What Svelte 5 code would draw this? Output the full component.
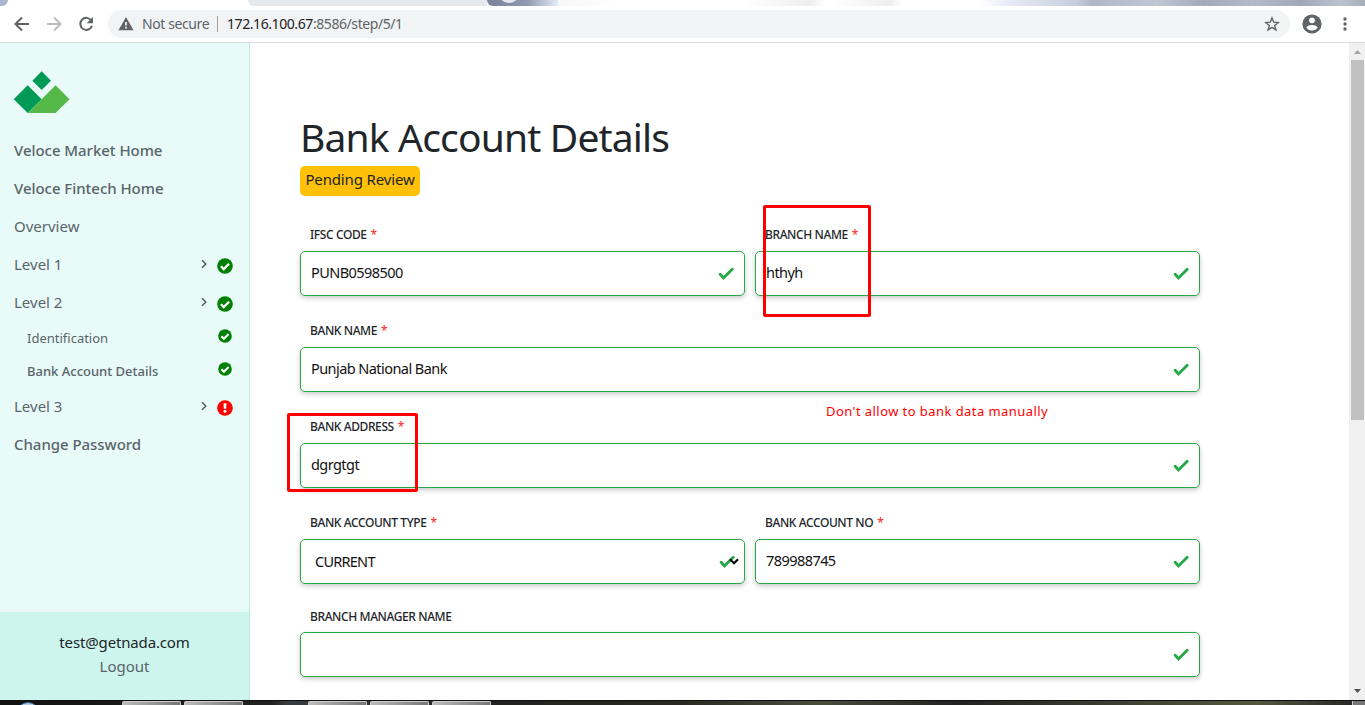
<script>
  const nav = [
    { text: 'Veloce Market Home', kind: 'strong' },
    { text: 'Veloce Fintech Home', kind: 'strong' },
    { text: 'Overview', kind: 'plain' },
    { text: 'Level 1', kind: 'level', arrow: true, status: 'ok' },
    { text: 'Level 2', kind: 'level', arrow: true, status: 'ok' },
    { text: 'Identification', kind: 'sub', status: 'ok' },
    { text: 'Bank Account Details', kind: 'sub strong', status: 'ok' },
    { text: 'Level 3', kind: 'level', arrow: true, status: 'bad' },
    { text: 'Change Password', kind: 'strong' }
  ];
  const rows = [
    [
      { label: 'IFSC CODE', req: true, value: 'PUNB0598500' },
      { label: 'BRANCH NAME', req: true, value: 'hthyh' }
    ],
    [{ label: 'BANK NAME', req: true, value: 'Punjab National Bank' }],
    [{ label: 'BANK ADDRESS', req: true, value: 'dgrgtgt' }],
    [
      { label: 'BANK ACCOUNT TYPE', req: true, value: 'CURRENT', select: true },
      { label: 'BANK ACCOUNT NO', req: true, value: '789988745' }
    ],
    [{ label: 'BRANCH MANAGER NAME', value: '' }]
  ];
</script>

<div class="screen">
  <div class="tabs">
    <i class="t1"></i><i class="t2"></i><i class="t3"></i><i class="t4"><b></b></i><i class="t5"></i>
  </div>
  <header>
    <svg class="ic" width="100" height="36" viewBox="0 0 100 36" fill="none" stroke="#5f6368" stroke-width="2">
      <path d="M29 18H16M22 11.5L15.5 18l6.500 6.500" />
      <path d="M47 18h13M54 11.500l6.500 6.500-6.500 6.500" stroke="#babcbe" />
      <path d="M91.300 14.500A6 6 0 1 0 92 19.800" />
      <path d="M93 11v6.300h-6.300z" fill="#5f6368" stroke="none" />
    </svg>
    <div class="omni">
      <svg width="16" height="14" viewBox="0 0 16 14"><path d="M8 0l7.500 13.300H.5z" fill="#5f6368" /><path d="M7.200 5h1.600v3.600H7.200zM7.200 9.800h1.600v1.700H7.200z" fill="#fff" /></svg>
      <span class="ns">Not secure</span>
      <i class="sep"></i>
      <span class="url">172.16.100.67<em>:8586/step/5/1</em></span>
      <svg class="star" width="16" height="16" viewBox="0 0 16 16"><path d="M8 1.900l1.700 4.300 4.600.3-3.600 2.900 1.200 4.500L8 11.400l-3.900 2.500 1.200-4.500-3.600-2.900 4.600-.3z" fill="none" stroke="#5f6368" stroke-width="1.400" /></svg>
    </div>
    <svg class="user" width="20" height="20" viewBox="0 0 20 20"><circle cx="10" cy="10" r="9.600" fill="#5f6368" /><circle cx="10" cy="6.300" r="2.900" fill="#fff" /><path d="M4.300 13.600c.6-1.800 3.700-2.600 5.700-2.600s5.100.8 5.700 2.600c-1.200 1.800-3.300 3-5.700 3s-4.500-1.200-5.700-3z" fill="#fff" /></svg>
    <svg class="dots" width="4" height="14" viewBox="0 0 4 14" fill="#5f6368"><circle cx="2" cy="2" r="1.700" /><circle cx="2" cy="7" r="1.700" /><circle cx="2" cy="12" r="1.700" /></svg>
  </header>

  <div class="page">
    <aside>
      <svg class="logo" width="56" height="42" viewBox="0 0 56 42">
        <path d="M27.700 .3l9.300 9.400-9.300 9.300-9.300-9.300z" fill="#009a57" />
        <path d="M13.700 14.300l14 14-14 13.700L-.3 28.300z" fill="#009a57" />
        <path d="M41.600 14.300l13.900 14-13.900 13.700H13.700z" fill="#54b948" />
      </svg>
      <nav>
        {#each nav as item}
          <a class={item.kind}>
            <span>{item.text}</span>
            {#if item.arrow}
              <svg class="arrow" width="6" height="10" viewBox="0 0 6 10"><path d="M1 1.300L4.800 5 1 8.700" fill="none" stroke="#4c5658" stroke-width="1.400" /></svg>
            {/if}
            {#if item.status === 'ok'}
              <svg class="status" viewBox="0 0 16 16"><circle cx="8" cy="8" r="7.800" fill="#008000" /><path d="M3.900 8.300l2.800 2.800 5.400-5.400" fill="none" stroke="#fff" stroke-width="2.300" /></svg>
            {:else if item.status === 'bad'}
              <svg class="status" viewBox="0 0 16 16"><circle cx="8" cy="8" r="7.800" fill="#f00" /><path d="M6.500 3.300h3l-.3 5.500H6.800z" fill="#fff" /><circle cx="8" cy="11.300" r="1.500" fill="#fff" /></svg>
            {/if}
          </a>
        {/each}
      </nav>
      <div class="account">
        <span class="mail">test@getnada.com</span>
        <span class="out">Logout</span>
      </div>
    </aside>

    <main>
      <h1>Bank Account Details</h1>
      <div class="badge">Pending Review</div>
      <form>
        {#each rows as row}
          <div class="row">
            {#each row as f}
              <div class="field">
                <div class="label"><span>{f.label}</span>{#if f.req}<sup>*</sup>{/if}</div>
                <div class="input" class:select={f.select}>
                  <span>{f.value}</span>
                  <svg class="tick" width="16" height="14" viewBox="0 0 16 14"><path d="M2.200 7.300l3.300 3.700L14.200 2.300" fill="none" stroke="#28a745" stroke-width="2.900" stroke-linecap="round" /></svg>
                  {#if f.select}
                    <svg class="caret" width="10" height="7" viewBox="0 0 10 7"><path d="M1 1.300l4 4 4-4" fill="none" stroke="#000" stroke-width="2" /></svg>
                  {/if}
                </div>
              </div>
            {/each}
          </div>
        {/each}
      </form>
    </main>

    <div class="scroll">
      <svg width="16" height="17" viewBox="0 0 16 17"><path d="M5 11h7L8.500 7z" fill="#a3a3a3" /></svg>
      <i></i>
      <svg class="down" width="16" height="17" viewBox="0 0 16 17"><path d="M5 6h7L8.500 10z" fill="#505050" /></svg>
    </div>
  </div>
  <div class="taskbar">
    <i class="w1"></i><i class="w2"></i><i class="w3"></i><i class="w4"></i><i class="w5"></i>
    <b class="orb"></b><b class="show"></b>
  </div>

  <div class="mark m1"></div>
  <div class="mark m2"></div>
  <div class="note">Don't allow to bank data manually</div>
</div>

<style>
  :global(body) { overflow: hidden; background: #fff; }
  .screen { position: relative; display: flex; flex-direction: column; width: 1365px; height: 705px; overflow: hidden; font-family: "Noto Sans", "Open Sans", sans-serif; color: #212529; }
  .tabs { display: flex; height: 6px; overflow: hidden; background: #fff; }
  .tabs i { height: 6px; }
  .t1 { width: 8px; background: #a9b6cd; border-bottom-right-radius: 6px; }
  .t2 { width: 240px; }
  .t3 { width: 239px; background: #e4e8ec; border-bottom-left-radius: 6px; }
  .t4 { width: 73px; background: linear-gradient(90deg, #79849c, #8f99b0 55%, #e4e9f8 96%, #fff); border-bottom-left-radius: 6px; overflow: hidden; }
  .t4 b { display: block; width: 20px; height: 18px; margin: -15px 0 0 12px; border-radius: 50%; background: #e4e8ec; }
  .t5 { flex: 1; background: linear-gradient(90deg, #f7f7f7 0, #fff 7%, #fff 23%, #eee 31%, #fff 33%, #fff 34%, #eee 41%, #fff 42.500%, #fff 52%, #e6eaf5 56%, #c8cede 64%, #b0b8c8 66%, #c0c6d4 74%, #a3abbb 80%, #b4bac8 86%, #a0a8b8 92%, #bcc1cf 97%, #a5adbb); }
  header { display: flex; align-items: center; box-sizing: border-box; height: 37px; border-bottom: 1px solid #d9dbdc; background: #fff; }
  .ic { margin-right: 8px; }
  .omni { display: flex; align-items: center; box-sizing: border-box; width: 1182px; height: 28px; padding: 0 10px; border-radius: 14px; background: #f1f3f4; font-size: 14px; color: #5f6368; white-space: nowrap; }
  .omni span { position: relative; top: -1px; }
  .ns { margin-left: 8px; width: 67px; letter-spacing: -0.4px; }
  .sep { width: 1px; height: 16px; margin: 0 9px 0 8px; background: #a2a5a8; }
  .url { color: #202124; letter-spacing: -0.42px; }
  .url em { font-style: normal; color: #5f6368; }
  .star { margin-left: auto; }
  .user { margin-left: 12px; }
  .dots { margin-left: 20.500px; }
  .page { display: flex; height: 657px; }
  aside { display: flex; flex-direction: column; box-sizing: border-box; width: 250px; border-right: 1px solid #b8eee2; background: #e9fbf8; }
  .logo { margin: 28px 0 19px 14px; flex: none; overflow: visible; }
  nav { display: flex; flex-direction: column; }
  nav a { display: flex; align-items: center; height: 38px; padding: 0 16px 0 14px; font-size: 15px; color: #59646a; white-space: nowrap; }
  nav a span { flex: 1; position: relative; top: -1px; }
  nav .strong { font-weight: 500; letter-spacing: -0.04px; }
  nav .sub { height: 33px; padding-left: 27px; padding-right: 17px; font-size: 13px; letter-spacing: 0; }
  .arrow { margin-right: 10px; position: relative; top: -1px; }
  .status { width: 16px; height: 16px; position: relative; top: 1px; }
  .sub .status { width: 14px; height: 14px; top: -3px; }
  .account { display: flex; flex-direction: column; align-items: center; box-sizing: border-box; height: 88px; margin-top: auto; padding-top: 18px; background: #cdf5ed; font-size: 15px; line-height: 24px; }
  .mail { letter-spacing: -0.15px; }
  .out { color: #59646a; }
  main { flex: 1; padding: 72px 0 0 50px; }
  h1 { margin: 0; height: 51px; font-size: 39px; line-height: 43px; font-weight: 400; letter-spacing: -0.84px; white-space: nowrap; }
  .badge { width: 120px; height: 30px; border-radius: 5px; background: #ffc107; text-align: center; font-size: 15px; line-height: 26px; letter-spacing: -0.15px; white-space: nowrap; }
  form { display: flex; flex-direction: column; gap: 23px; width: 900px; margin-top: 27px; }
  .row { display: flex; gap: 10px; }
  .row:last-child { margin-top: -2px; }
  .row:last-child .label { margin-bottom: 3px; }
  .field { flex: 1; }
  .label { height: 24px; margin-bottom: 4px; padding-left: 10px; font-size: 12px; line-height: 24px; font-weight: 500; letter-spacing: -0.4px; white-space: nowrap; }
  .label sup { margin-left: 4px; font-size: 12px; line-height: 0; vertical-align: 0; color: #f22; font-weight: 400; }
  .input { display: flex; align-items: center; box-sizing: border-box; height: 45px; padding: 0 10px; border: 1px solid #28a745; border-radius: 5px; background: #fff; box-shadow: 0 2px 5px rgba(0, 0, 0, .22); font-size: 14.500px; letter-spacing: -0.56px; color: #111; }
  .input span { flex: 1; position: relative; top: -2px; }
  .input.select { padding: 0 4px 0 14px; }
  .input.select span { top: -1px; letter-spacing: -0.75px; }
  .caret { margin-left: -6px; margin-right: 1px; }
  .select .tick { margin-right: 0; }
  .scroll { display: flex; flex-direction: column; width: 16px; background: #f0f0f0; }
  .scroll i { width: 13px; height: 360px; margin-left: 2px; background: #c1c1c1; }
  .down { margin-top: auto; }
  .taskbar { position: relative; height: 5px; overflow: hidden; background: linear-gradient(90deg, #111, #222 20%, #3a3d40 21%, #222 36%, #2a2a22 50%, #4a4e3c 60%, #222 70%, #55583f 92%, #222); border-top: 1px solid #111; box-sizing: border-box; }
  .taskbar i { position: absolute; top: 0; width: 57px; height: 5px; border: 1px solid #ccc; border-bottom: 0; border-radius: 2px 2px 0 0; background: linear-gradient(90deg, #bbb, #777); }
  .taskbar .w1 { left: 122px; }
  .taskbar .w2 { left: 184px; }
  .taskbar .w3 { left: 308px; }
  .taskbar .w4 { left: 370px; }
  .taskbar .w5 { left: 432px; }
  .orb { position: absolute; left: 16px; top: 1px; width: 22px; height: 22px; border-radius: 50%; background: #b7cde0; border: 1px solid #2c6494; }
  .show { position: absolute; right: 0; top: 0; width: 12px; height: 5px; background: #777; border-left: 1px solid #ccc; }
  .mark { position: absolute; box-sizing: border-box; border: 3px solid #f00; border-radius: 2px; }
  .m1 { left: 763px; top: 205px; width: 108px; height: 112px; }
  .m2 { left: 287px; top: 413px; width: 131px; height: 79px; }
  .note { position: absolute; left: 826px; top: 401px; font-size: 13px; line-height: 20px; letter-spacing: 0.43px; color: #f00; white-space: nowrap; }
</style>
